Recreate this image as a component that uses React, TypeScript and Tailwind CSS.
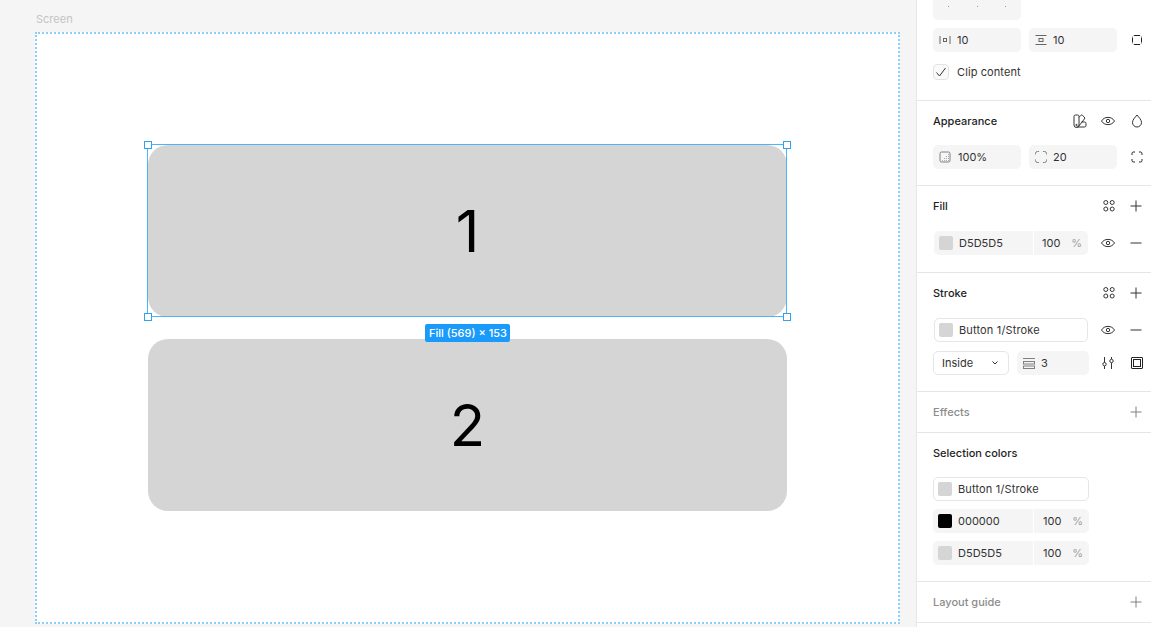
import type { ReactNode } from 'react';

const Ic = ({ children, className = '' }: { children: ReactNode; className?: string }) => (
  <svg width="16" height="16" viewBox="0 0 16 16" fill="none" stroke="currentColor" strokeWidth="1" className={`shrink-0 ${className}`}>
    {children}
  </svg>
);

const Plus = () => <Ic className="text-[#333]"><path d="M8 2.500v11M2.500 8h11" /></Ic>;
const Minus = () => <Ic className="text-[#333]"><path d="M2.500 8h11" /></Ic>;
const Eye = () => (
  <Ic className="text-[#333]">
    <path d="M1.500 8C3 5.600 5.200 4.400 8 4.400S13 5.600 14.500 8C13 10.400 10.800 11.600 8 11.600S3 10.400 1.500 8Z" />
    <circle cx="8" cy="8" r="1.700" />
  </Ic>
);
const Styles = () => (
  <Ic className="text-[#333]">
    <circle cx="4.800" cy="4.500" r="2" /><circle cx="11.200" cy="4.500" r="2" />
    <circle cx="4.800" cy="11" r="2" /><circle cx="11.200" cy="11" r="2" />
  </Ic>
);

function Section({ title, muted, actions, children, className = '', gap = 'gap-3' }: { title: string; muted?: boolean; actions?: ReactNode; children?: ReactNode; className?: string; gap?: string }) {
  return (
    <section className={`border-b border-[#e6e6e6] pl-4 pr-[7px] ${className}`}>
      <div className="flex h-10 items-center justify-between">
        <span className={`text-[11px] font-medium ${muted ? 'text-[#8c8c8c]' : 'text-[#1e1e1e]'}`}>{title}</span>
        <div className={`flex items-center ${gap}`}>{actions}</div>
      </div>
      {children}
    </section>
  );
}

function Field({ icon, value, w = 'w-[88px]' }: { icon: ReactNode; value: string; w?: string }) {
  return (
    <div className={`flex h-6 shrink-0 items-center gap-[4px] rounded-[5px] bg-[#f5f5f5] pl-[4px] ${w}`}>
      {icon}
      <span>{value}</span>
    </div>
  );
}

function ColorRow({ color, hex }: { color: string; hex: string }) {
  return (
    <div className="flex h-6 w-[156px] items-center rounded-[5px] bg-[#f5f5f5]">
      <div className="flex h-full w-[101px] items-center gap-[6px] border-r border-white pl-[5px]">
        <span className="size-[14px] rounded-[2px]" style={{ backgroundColor: color }} />
        <span>{hex}</span>
      </div>
      <span className="ml-[9px]">100</span>
      <span className="ml-[11px] text-[#a0a0a0]">%</span>
    </div>
  );
}

function Handle({ className }: { className: string }) {
  return <span className={`absolute size-2 border-[1.5px] border-[#2fa3f0] bg-white ${className}`} />;
}

function Card({ n, selected }: { n: string; selected?: boolean }) {
  return (
    <div className="relative flex h-[172px] w-[639px] items-center justify-center rounded-[20px] bg-[#d5d5d5]">
      <span className="text-[58px] leading-none text-black">{n}</span>
      {selected && (
        <>
          <div className="absolute -left-px -top-px bottom-0 right-0 border-[1.5px] border-[#4eb4f7]" />
          <Handle className="-left-[4px] -top-[4px]" />
          <Handle className="-right-[4px] -top-[4px]" />
          <Handle className="-bottom-[4px] -left-[4px]" />
          <Handle className="-bottom-[4px] -right-[4px]" />
          <div className="absolute left-[277px] top-[179px] z-10 whitespace-nowrap rounded-[2px] bg-[#1a9bfc] pb-px pl-[4px] pr-[3px] pt-[1.5px] text-[11px] font-medium leading-[15px] text-white">
            Fill (569) × 153
          </div>
        </>
      )}
    </div>
  );
}

export default function App() {
  return (
    <div className="flex h-[627px] w-[1151px] overflow-hidden bg-[#f5f5f5] font-['Inter',sans-serif]">
      <main className="flex h-full w-[916px] flex-col pl-[35px] pt-[13px]">
        <span className="h-[19px] pl-px text-[11px] leading-[13px] text-[#c4c4c4]">Screen</span>
        <div className="flex h-[592px] w-[865px] flex-col items-center justify-center gap-[22px] border-2 border-dotted border-[#8ccffa] bg-white">
          <Card n="1" selected />
          <Card n="2" />
        </div>
      </main>

      <aside className="h-full w-[235px] border-l border-[#e6e6e6] bg-white text-[11px] text-[#333]">
        <section className="h-[101px] border-b border-[#e6e6e6] pl-4 pr-[6px]">
          <div className="flex h-5 w-[88px] items-start justify-between rounded-b-[5px] bg-[#f5f5f5] px-[15px] pt-[6px]">
            <span className="size-px bg-[#999]" /><span className="size-px bg-[#999]" /><span className="size-px bg-[#999]" />
          </div>
          <div className="mt-2 flex items-center gap-2">
            <Field value="10" icon={<Ic className="text-[#666]"><path d="M3 4v8M13 4v8" /><rect x="6.500" y="6.500" width="3" height="3" /></Ic>} />
            <Field value="10" icon={<Ic className="text-[#666]"><path d="M2.500 3.500h11M2.500 12.500h11" /><rect x="6" y="6.500" width="4" height="3" /></Ic>} />
            <Ic className="ml-[4px] text-[#222]"><path d="M5 3.500h6M5 12.500h6M3.500 5.500v5M12.500 5.500v5" /><path d="M3.500 4.500 4.200 3.800M12.500 4.500 11.800 3.800M3.500 11.500 4.200 12.200M12.500 11.500 11.800 12.200" strokeWidth=".7" /></Ic>
          </div>
          <div className="mt-3 flex items-center gap-2">
            <span className="flex size-4 items-center justify-center rounded-[4px] border border-[#e3e3e3] bg-[#fafafa]">
              <svg width="12" height="12" viewBox="0 0 12 12" fill="none" stroke="#333" strokeWidth="1"><path d="M1.500 6.500 4.500 10 10.500 2" /></svg>
            </span>
            <span className="tracking-[0.1px]">Clip content</span>
          </div>
        </section>

        <Section
          title="Appearance"
          className="h-[85px]"
          actions={
            <>
              <Ic className="text-[#333]">
                <path d="M2 3.500A1.500 1.500 0 0 1 3.500 2h2A1.500 1.500 0 0 1 7 3.500V12a2.500 2.500 0 0 1-5 0Z" />
                <circle cx="4.500" cy="12" r=".7" />
                <path d="M7 4.200 8.700 2.500a1.400 1.400 0 0 1 2 0l1.600 1.600a1.400 1.400 0 0 1 0 2L6.500 13.500" />
                <path d="M9.500 9h3a1.500 1.500 0 0 1 1.500 1.500v2a1.500 1.500 0 0 1-1.500 1.500H4.500" />
              </Ic>
              <Eye />
              <Ic className="text-[#333]"><path d="M9 2C11 4.600 13.500 6.600 13.500 9.500a4.500 4.500 0 0 1-9 0C4.500 6.600 7 4.600 9 2Z" /></Ic>
            </>
          }
        >
          <div className="mt-1 flex items-center gap-2">
            <Field value="100%" icon={
              <Ic className="mr-px text-[#808080]">
                <rect x="3" y="3" width="10" height="10" rx="1.500" />
                <path d="M11 5.500h.8M9 7.500h.8M11 7.500h.8M7 9.500h.8M9 9.500h.8M11 9.500h.8M5 11.500h.8M7 11.500h.8M9 11.500h.8M11 11.500h.8" strokeWidth=".8" />
              </Ic>
            } />
            <Field value="20" icon={<Ic className="text-[#808080]"><path d="M2.500 5.500V4.500a2 2 0 0 1 2-2h1.500M10 2.500h1.500a2 2 0 0 1 2 2v1M13.500 10.500v1a2 2 0 0 1-2 2H10M6 13.500H4.500a2 2 0 0 1-2-2v-1" /></Ic>} />
            <Ic className="ml-[4px] text-[#222]"><path d="M3 6V4.500a1.500 1.500 0 0 1 1.500-1.500H6M10 3h1.500A1.500 1.500 0 0 1 13 4.500V6M13 10v1.500a1.500 1.500 0 0 1-1.500 1.500H10M6 13H4.500A1.500 1.500 0 0 1 3 11.500V10" /></Ic>
          </div>
        </Section>

        <Section title="Fill" className="h-[87px]" gap="gap-[11px]" actions={<><Styles /><Plus /></>}>
          <div className="ml-px mt-[5px] flex items-center">
            <div className="flex h-6 w-[154px] items-center rounded-[5px] bg-[#f5f5f5]">
              <div className="flex h-full w-[100px] items-center gap-[6px] border-r border-white pl-[5px]">
                <span className="size-[14px] rounded-[2px] bg-[#d5d5d5]" />
                <span>D5D5D5</span>
              </div>
              <span className="ml-2">100</span>
              <span className="ml-[11px] text-[#a0a0a0]">%</span>
            </div>
            <div className="ml-3 flex items-center gap-3"><Eye /><Minus /></div>
          </div>
        </Section>

        <Section title="Stroke" className="h-[119px]" gap="gap-[11px]" actions={<><Styles /><Plus /></>}>
          <div className="ml-px mt-[5px] flex items-center">
            <div className="flex h-6 w-[154px] items-center gap-[6px] rounded-[5px] border border-[#e6e6e6] pl-[4px]">
              <span className="size-[14px] rounded-[2px] bg-[#d5d5d5]" />
              <span className="tracking-[0.15px]">Button 1/Stroke</span>
            </div>
            <div className="ml-3 flex items-center gap-3"><Eye /><Minus /></div>
          </div>
          <div className="mt-[9px] flex items-center">
            <div className="flex h-6 w-[76px] shrink-0 items-center justify-between rounded-[5px] border border-[#e6e6e6] pl-2 pr-[10px]">
              <span>Inside</span>
              <svg width="6" height="4" viewBox="0 0 6 4" fill="none" stroke="#333"><path d="M.500.500 3 3 5.500.500" /></svg>
            </div>
            <Field w="w-[72px] ml-2" value="3" icon={<Ic className="text-[#808080]"><path d="M2 3.500h12" /><rect x="2.500" y="6.500" width="11" height="2.500" /><rect x="2.500" y="11" width="11" height="2.500" /></Ic>} />
            <div className="ml-[11px] flex shrink-0 items-center gap-3">
              <Ic className="text-[#333]"><path d="M4.500 2v5.500M4.500 11v3M11.500 2v2M11.500 8v6" /><circle cx="4.500" cy="9.200" r="1.700" /><circle cx="11.500" cy="6" r="1.700" /></Ic>
              <Ic className="ml-px text-[#222]"><rect x="2.500" y="2.500" width="11" height="11" rx=".5" /><rect x="4.500" y="4.500" width="7" height="7" /></Ic>
            </div>
          </div>
        </Section>

        <Section title="Effects" muted actions={<Ic className="text-[#808080]"><path d="M8 2.500v11M2.500 8h11" /></Ic>} className="h-[41px]" />

        <Section title="Selection colors" className="h-[149px]">
          <div className="mt-1 flex flex-col gap-2">
            <div className="flex h-6 w-[156px] items-center gap-[6px] rounded-[5px] border border-[#e6e6e6] pl-[4px]">
              <span className="size-[14px] rounded-[2px] bg-[#d5d5d5]" />
              <span className="tracking-[0.15px]">Button 1/Stroke</span>
            </div>
            <ColorRow color="#000000" hex="000000" />
            <ColorRow color="#d5d5d5" hex="D5D5D5" />
          </div>
        </Section>

        <Section title="Layout guide" muted actions={<Ic className="text-[#808080]"><path d="M8 2.500v11M2.500 8h11" /></Ic>} className="h-[41px]" />
      </aside>
    </div>
  );
}
